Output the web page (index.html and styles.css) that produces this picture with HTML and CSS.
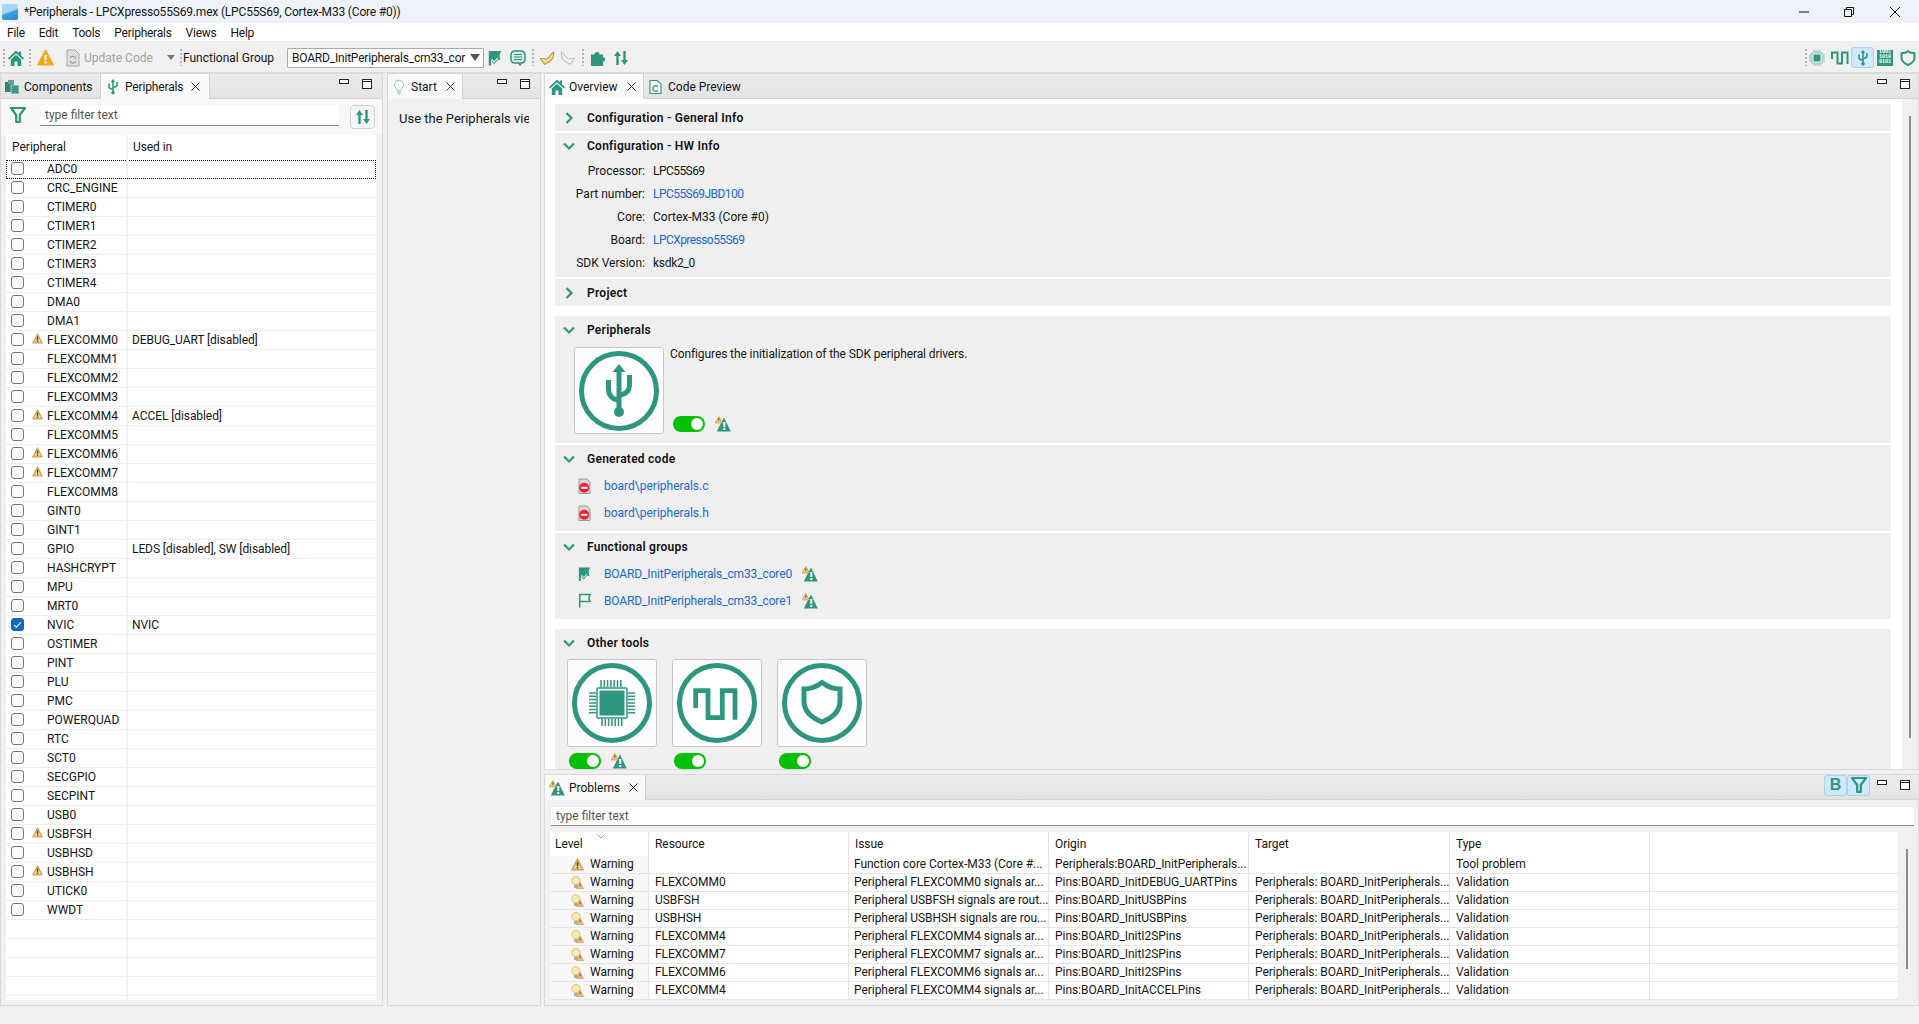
FILE: index.html
```html
<!DOCTYPE html>
<html lang="en">
<head>
<meta charset="utf-8">
<title>Peripherals - LPCXpresso55S69.mex</title>
<link rel="stylesheet" href="styles.css">
</head>
<body>
<svg class="defs" width="0" height="0">
  <symbol id="warn-t" viewBox="0 0 16 16"><path d="M9 1.500 15.800 15.500H1.800L5 9z" fill="#2e967e"/><rect x="8.300" y="6" width="2" height="5" fill="#fff"/><rect x="8.300" y="12" width="2" height="2" fill="#fff"/><path d="M3.800 0.500 7.500 7H0.200z" fill="#f3c673" stroke="#b98d3f" stroke-width=".6" stroke-linejoin="round"/><rect x="3.300" y="2.200" width="1" height="2.600" fill="#6b4a12"/></symbol>
  <symbol id="warn-y" viewBox="0 0 12 12"><path d="M6 1 11 10.800H1z" fill="#f8d591" stroke="#cfa262" stroke-linejoin="round" stroke-width="1.400"/><rect x="5.300" y="3.800" width="1.500" height="3.800" fill="#5a4312"/><rect x="5.300" y="8.300" width="1.500" height="1.500" fill="#5a4312"/></symbol>
  <symbol id="warn-b" viewBox="0 0 14 14"><circle cx="5.300" cy="5" r="4.500" fill="#fbeab0" stroke="#d6bd74"/><rect x="3.300" y="9.500" width="4" height="3.500" fill="#a9aeb8"/><path d="M9.800 6.500 13.500 13.500H6z" fill="#f3c070" stroke="#b5863a" stroke-width=".6"/><rect x="9.300" y="8.500" width=".9" height="2.700" fill="#5a4312"/></symbol>
  <symbol id="home" viewBox="0 0 16 16"><path d="M8 .5 0 8.200l1.200 1.400L8 3.200l6.800 6.400L16 8.200l-3-2.900V1.500h-2.200v1.700z" fill="#2e967e"/><path d="M2.800 9.500 8 4.700l5.200 4.800V16H9.500v-4.500h-3V16H2.800z" fill="#2e967e"/></symbol>
  <symbol id="comp" viewBox="0 0 16 16"><rect x="1" y="3" width="9" height="10" fill="#2e8571"/><rect x="4" y="1" width="6" height="4" fill="#58a795"/><rect x="7" y="6" width="8" height="9" fill="#3f9a85" stroke="#e8e8e8" stroke-width=".7"/></symbol>
  <symbol id="usb" viewBox="0 0 16 18"><g stroke="#2e967e" fill="none" stroke-width="1.800"><path d="M8 3v12"/><path d="M3.500 5v3.500q0 2.500 4 3"/><path d="M12.500 3.500v3q0 2.500-4 3"/></g><path d="M8 0l2.500 3.500h-5z" fill="#2e967e"/><circle cx="8" cy="15.500" r="2" fill="#2e967e"/></symbol>
  <symbol id="bulb" viewBox="0 0 14 18"><path d="M7 1a5.500 5.500 0 0 0-3 10q.8.800 1 2.500h4q.2-1.700 1-2.500a5.500 5.500 0 0 0-3-10z" fill="#fff" stroke="#74bfae"/><path d="M5 15h4M5.500 17h3" stroke="#74bfae"/></symbol>
  <symbol id="codep" viewBox="0 0 14 16"><path d="M1 1h8l4 4v10H1z" fill="#eef5f3" stroke="#2e967e" stroke-width="1.200"/><path d="M9.500 7.500a3 3 0 1 0 0 4" fill="none" stroke="#2e967e" stroke-width="1.400"/></symbol>
  <symbol id="filter" viewBox="0 0 16 16"><path d="M1 1h14L9.800 8v7H6.200V8z" fill="none" stroke="#2e967e" stroke-width="2.200" stroke-linejoin="round"/></symbol>
  <symbol id="sort" viewBox="0 0 16 16"><path d="M4.500 1 8 6H5.700v9H3.300V6H1zM11.500 15 8 10h2.300V1h2.400v9H15z" fill="#2e967e"/></symbol>
  <symbol id="doc" viewBox="0 0 14 18"><path d="M1 1h8l4 4v12H1z" fill="#e0e0e0" stroke="#a8a8a8"/><path d="M9.800 9.500a3 3 0 0 0-5.500-.5M4.200 12a3 3 0 0 0 5.500.5" fill="none" stroke="#9a9a9a" stroke-width="1.300"/></symbol>
  <symbol id="flag-c" viewBox="0 0 16 18"><path d="M1 1h14l-2 5 1 5H10l-3 3-2.500-3H3.500v6.500H1z" fill="#2e967e"/><path d="M4.500 11.500 7 14.500 11.500 9.500" fill="none" stroke="#2e967e" stroke-width="1.500"/><path d="M4.500 10.500 7 13.500 11 9" fill="none" stroke="#fff" stroke-width="1.200"/></symbol>
  <symbol id="flag" viewBox="0 0 15 17"><path d="M2 16V1h12l-1.500 4.500L14 9H2" fill="none" stroke="#2e967e" stroke-width="1.800"/></symbol>
  <symbol id="dbdoc" viewBox="0 0 16 16"><path d="M4.500 1h7A3.500 3.500 0 0 1 15 4.500v5a3.500 3.500 0 0 1-3.500 3.500H11l-1 2-1-2H4.500A3.500 3.500 0 0 1 1 9.500v-5A3.500 3.500 0 0 1 4.500 1z" fill="#d2e9e3" stroke="#2e967e" stroke-width="1.500"/><path d="M4 4.500h8M4 7h8M4 9.500h8" stroke="#2e967e" stroke-width="1.200"/></symbol>
  <symbol id="undo" viewBox="0 0 17 16"><path d="M15.500 1.500c.5 4-1 8-4 10-2 1.300-4 2-5.500 3.200L1.500 8.500H5c1 0 2.500 1 3.500.5 2-1 3-4 7-7.500z" fill="#f6d991" stroke="#c9973f" stroke-linejoin="round" stroke-width="1.200"/></symbol>
  <symbol id="redo" viewBox="0 0 17 16"><path d="M1.500 1.500c-.5 4 1 8 4 10 2 1.300 4 2 5.500 3.200l4.500-6.200H12c-1 0-2.500 1-3.500.5-2-1-3-4-7-7.500z" fill="#f4f4f4" stroke="#c4c4c4" stroke-linejoin="round" stroke-width="1.200"/></symbol>
  <symbol id="lego" viewBox="0 0 16 16"><path d="M1 4.500h3.500a2.500 2.500 0 1 1 5 0H13v2.800a2.200 2.200 0 1 1 0 4.400V16H1z" fill="#2e967e"/></symbol>
  <symbol id="chip" viewBox="0 0 16 16"><rect x="3" y="3" width="10" height="10" fill="#fff" stroke="#7fc2b2"/><rect x="4.500" y="4.500" width="7" height="7" fill="#2e967e"/><path d="M5 0v2.500M7 0v2.500M9 0v2.500M11 0v2.500M5 13.500V16M7 13.500V16M9 13.500V16M11 13.500V16M0 5h2.500M0 7h2.500M0 9h2.500M0 11h2.500M13.500 5H16M13.500 7H16M13.500 9H16M13.500 11H16" stroke="#7fc2b2"/></symbol>
  <symbol id="pulse" viewBox="0 0 18 16"><path d="M1 9V2.500H6.500V13.500H11V2.500H16.500V14" fill="none" stroke="#2e967e" stroke-width="2"/></symbol>
  <symbol id="shield" viewBox="0 0 16 16"><path d="M8 1.200C6.500 2.500 4 3.200 1.500 3.200V8c0 3 3 5.500 6.500 7 3.500-1.500 6.500-4 6.500-7V3.200C12 3.200 9.500 2.500 8 1.200z" fill="none" stroke="#2e967e" stroke-width="2"/></symbol>
  <symbol id="nogo" viewBox="0 0 13 16"><path d="M1 1h8l3 3v11.500H1z" fill="#d8d8d8" stroke="#9a9a9a"/><circle cx="6.200" cy="9.800" r="5" fill="#f02030"/><rect x="3" y="8.800" width="6.500" height="2" fill="#fff"/></symbol>
  <symbol id="t-usb" viewBox="0 0 80 80"><circle cx="40" cy="40" r="37.500" fill="#fff" stroke="#2e967e" stroke-width="5"/><g fill="none" stroke="#2e967e" stroke-width="5"><path d="M40 18v42"/><path d="M29.500 29v9q0 9 9 11"/><path d="M50.500 24v10q0 8-9 10"/></g><path d="M40 13l6.500 8h-13z" fill="#2e967e"/><circle cx="40" cy="61" r="5" fill="#2e967e"/></symbol>
  <symbol id="t-chip" viewBox="0 0 80 80"><circle cx="40" cy="40" r="37.500" fill="#fff" stroke="#2e967e" stroke-width="5"/><rect x="27.500" y="27.500" width="25" height="25" fill="#2e967e"/><rect x="25" y="25" width="30" height="30" rx="1" fill="none" stroke="#2e967e" stroke-width="1.500"/><path d="M29 24v-7M32.300 24v-7M35.600 24v-7M38.900 24v-7M42.200 24v-7M45.500 24v-7M48.800 24v-7M30 56v7M33.300 56v7M36.600 56v7M39.900 56v7M43.200 56v7M46.500 56v7M49.800 56v7M24 30h-7M24 33.300h-7M24 36.600h-7M24 39.900h-7M24 43.200h-7M24 46.500h-7M24 49.800h-7M56 30h7M56 33.300h7M56 36.600h7M56 39.900h7M56 43.200h7M56 46.500h7M56 49.800h7" stroke="#2e967e" stroke-width="1.500"/></symbol>
  <symbol id="t-pulse" viewBox="0 0 80 80"><circle cx="40" cy="40" r="37.500" fill="#fff" stroke="#2e967e" stroke-width="5"/><path d="M18.700 45V27.700H31V54.700H45.300V27.700H58V56.700" fill="none" stroke="#2e967e" stroke-width="4.800"/></symbol>
  <symbol id="t-shield" viewBox="0 0 80 80"><circle cx="40" cy="40" r="37.500" fill="#fff" stroke="#2e967e" stroke-width="5"/><path d="M40 19.500C34 24 28 26 22 26V38C22 48 30 55 40 59 50 55 58 48 58 38V26C52 26 46 24 40 19.500Z" fill="none" stroke="#2e967e" stroke-width="5"/></symbol>
  <symbol id="chev-r" viewBox="0 0 12 12"><path d="M3.500 1 8.500 6l-5 5" fill="none" stroke="#2e967e" stroke-width="2.200"/></symbol>
  <symbol id="chev-d" viewBox="0 0 12 12"><path d="M1 3.500 6 8.500l5-5" fill="none" stroke="#2e967e" stroke-width="2.200"/></symbol>
  <symbol id="x" viewBox="0 0 10 10"><path d="M.5.500l9 9M9.500.500l-9 9" stroke="#222" fill="none"/></symbol>
  <symbol id="min" viewBox="0 0 10 6"><rect x=".5" y=".5" width="9" height="4" fill="#fff" stroke="#222"/></symbol>
  <symbol id="max" viewBox="0 0 10 10"><rect x=".5" y=".5" width="9" height="9" fill="#fff" stroke="#222"/><path d="M0 2.500h10" stroke="#222"/></symbol>
</svg>

<header class="titlebar">
  <span class="appicon"></span>
  <span class="titletext">*Peripherals - LPCXpresso55S69.mex (LPC55S69, Cortex-M33 (Core #0))</span>
  <span class="winctl">
    <svg class="wmin" viewBox="0 0 10 2"><path d="M0 1h10" stroke="#111"/></svg>
    <svg class="wres" viewBox="0 0 10 10"><path d="M.5 2.500h7v7h-7zM2.500 2.500V.5h7v7H7.500" fill="none" stroke="#111"/></svg>
    <svg class="wclose" viewBox="0 0 10 10"><path d="M0 0l10 10M10 0 0 10" stroke="#111"/></svg>
  </span>
</header>

<nav class="menubar"><span>File</span><span>Edit</span><span>Tools</span><span>Peripherals</span><span>Views</span><span>Help</span></nav>

<div class="toolbar">
  <span class="grip g1"></span>
  <svg class="ti ml3"><use href="#home"/></svg>
  <span class="grip g2"></span>
  <svg class="warnbig"  viewBox="0 0 16 16"><path d="M8 1 15.500 15H.5z" fill="#f9a51a" stroke="#f9a51a" stroke-linejoin="round"/><rect x="7" y="5.500" width="2" height="5" fill="#fff"/><rect x="7" y="11.500" width="2" height="2" fill="#fff"/></svg>
  <svg class="docicon"><use href="#doc"/></svg>
  <span class="tb-muted">Update Code</span>
  <span class="tb-arrow"></span>
  <span class="grip g2"></span>
  <span class="tb-label">Functional Group</span>
  <span class="combo"><span class="combo-text">BOARD_InitPeripherals_cm33_cor</span><span class="combo-arrow"></span></span>
  <svg class="ti ml3"><use href="#flag-c"/></svg>
  <svg class="ti ml7"><use href="#dbdoc"/></svg>
  <span class="grip g3"></span>
  <svg class="ti ml5"><use href="#undo"/></svg>
  <svg class="ti ml5"><use href="#redo"/></svg>
  <span class="grip g3"></span>
  <svg class="ti ml6"><use href="#lego"/></svg>
  <svg class="ti ml7"><use href="#sort"/></svg>
  <span class="tb-right">
    <span class="grip"></span>
    <svg class="ti ml2"><use href="#chip"/></svg>
    <svg class="ti-w ml6"><use href="#pulse"/></svg>
    <span class="tbtn on ml2"><svg class="ti"><use href="#usb"/></svg></span>
    <span class="binary ml3"><span>1001</span><span>1010</span><span>0101</span></span>
    <svg class="ti ml7"><use href="#shield"/></svg>
  </span>
</div>

<main class="workbench">
  <section class="panel p-left">
    <div class="tabbar">
      <div class="tab t-comp"><svg class="tabicon"><use href="#comp"/></svg><span>Components</span></div>
      <div class="tab sel t-peri"><svg class="tabicon"><use href="#usb"/></svg><span>Peripherals</span><svg class="xicon"><use href="#x"/></svg></div>
      <div class="panelctl narrow"><svg class="minicon"><use href="#min"/></svg><svg class="maxicon"><use href="#max"/></svg></div>
    </div>
    <div class="filterrow">
      <svg class="filtericon"><use href="#filter"/></svg>
      <div class="filterinput">type filter text</div>
      <div class="sortbtn"><svg class="ti"><use href="#sort"/></svg></div>
    </div>
    <div class="ptable">
      <div class="phead"><span class="pc1">Peripheral</span><span class="pc2">Used in</span></div>
      <div class="prow focus"><div class="pc1"><i class="cb"></i><span class="pname">ADC0</span></div><div class="pc2"></div></div>
      <div class="prow"><div class="pc1"><i class="cb"></i><span class="pname">CRC_ENGINE</span></div><div class="pc2"></div></div>
      <div class="prow"><div class="pc1"><i class="cb"></i><span class="pname">CTIMER0</span></div><div class="pc2"></div></div>
      <div class="prow"><div class="pc1"><i class="cb"></i><span class="pname">CTIMER1</span></div><div class="pc2"></div></div>
      <div class="prow"><div class="pc1"><i class="cb"></i><span class="pname">CTIMER2</span></div><div class="pc2"></div></div>
      <div class="prow"><div class="pc1"><i class="cb"></i><span class="pname">CTIMER3</span></div><div class="pc2"></div></div>
      <div class="prow"><div class="pc1"><i class="cb"></i><span class="pname">CTIMER4</span></div><div class="pc2"></div></div>
      <div class="prow"><div class="pc1"><i class="cb"></i><span class="pname">DMA0</span></div><div class="pc2"></div></div>
      <div class="prow"><div class="pc1"><i class="cb"></i><span class="pname">DMA1</span></div><div class="pc2"></div></div>
      <div class="prow"><div class="pc1"><i class="cb"></i><svg class="pwarn"><use href="#warn-y"/></svg><span class="pname">FLEXCOMM0</span></div><div class="pc2">DEBUG_UART [disabled]</div></div>
      <div class="prow"><div class="pc1"><i class="cb"></i><span class="pname">FLEXCOMM1</span></div><div class="pc2"></div></div>
      <div class="prow"><div class="pc1"><i class="cb"></i><span class="pname">FLEXCOMM2</span></div><div class="pc2"></div></div>
      <div class="prow"><div class="pc1"><i class="cb"></i><span class="pname">FLEXCOMM3</span></div><div class="pc2"></div></div>
      <div class="prow"><div class="pc1"><i class="cb"></i><svg class="pwarn"><use href="#warn-y"/></svg><span class="pname">FLEXCOMM4</span></div><div class="pc2">ACCEL [disabled]</div></div>
      <div class="prow"><div class="pc1"><i class="cb"></i><span class="pname">FLEXCOMM5</span></div><div class="pc2"></div></div>
      <div class="prow"><div class="pc1"><i class="cb"></i><svg class="pwarn"><use href="#warn-y"/></svg><span class="pname">FLEXCOMM6</span></div><div class="pc2"></div></div>
      <div class="prow"><div class="pc1"><i class="cb"></i><svg class="pwarn"><use href="#warn-y"/></svg><span class="pname">FLEXCOMM7</span></div><div class="pc2"></div></div>
      <div class="prow"><div class="pc1"><i class="cb"></i><span class="pname">FLEXCOMM8</span></div><div class="pc2"></div></div>
      <div class="prow"><div class="pc1"><i class="cb"></i><span class="pname">GINT0</span></div><div class="pc2"></div></div>
      <div class="prow"><div class="pc1"><i class="cb"></i><span class="pname">GINT1</span></div><div class="pc2"></div></div>
      <div class="prow"><div class="pc1"><i class="cb"></i><span class="pname">GPIO</span></div><div class="pc2">LEDS [disabled], SW [disabled]</div></div>
      <div class="prow"><div class="pc1"><i class="cb"></i><span class="pname">HASHCRYPT</span></div><div class="pc2"></div></div>
      <div class="prow"><div class="pc1"><i class="cb"></i><span class="pname">MPU</span></div><div class="pc2"></div></div>
      <div class="prow"><div class="pc1"><i class="cb"></i><span class="pname">MRT0</span></div><div class="pc2"></div></div>
      <div class="prow"><div class="pc1"><i class="cb on"><svg class="cbcheck" viewBox="0 0 10 10"><path d="M2 5.500 4 7.500 8 3" fill="none" stroke="#fff"/></svg></i><span class="pname">NVIC</span></div><div class="pc2">NVIC</div></div>
      <div class="prow"><div class="pc1"><i class="cb"></i><span class="pname">OSTIMER</span></div><div class="pc2"></div></div>
      <div class="prow"><div class="pc1"><i class="cb"></i><span class="pname">PINT</span></div><div class="pc2"></div></div>
      <div class="prow"><div class="pc1"><i class="cb"></i><span class="pname">PLU</span></div><div class="pc2"></div></div>
      <div class="prow"><div class="pc1"><i class="cb"></i><span class="pname">PMC</span></div><div class="pc2"></div></div>
      <div class="prow"><div class="pc1"><i class="cb"></i><span class="pname">POWERQUAD</span></div><div class="pc2"></div></div>
      <div class="prow"><div class="pc1"><i class="cb"></i><span class="pname">RTC</span></div><div class="pc2"></div></div>
      <div class="prow"><div class="pc1"><i class="cb"></i><span class="pname">SCT0</span></div><div class="pc2"></div></div>
      <div class="prow"><div class="pc1"><i class="cb"></i><span class="pname">SECGPIO</span></div><div class="pc2"></div></div>
      <div class="prow"><div class="pc1"><i class="cb"></i><span class="pname">SECPINT</span></div><div class="pc2"></div></div>
      <div class="prow"><div class="pc1"><i class="cb"></i><span class="pname">USB0</span></div><div class="pc2"></div></div>
      <div class="prow"><div class="pc1"><i class="cb"></i><svg class="pwarn"><use href="#warn-y"/></svg><span class="pname">USBFSH</span></div><div class="pc2"></div></div>
      <div class="prow"><div class="pc1"><i class="cb"></i><span class="pname">USBHSD</span></div><div class="pc2"></div></div>
      <div class="prow"><div class="pc1"><i class="cb"></i><svg class="pwarn"><use href="#warn-y"/></svg><span class="pname">USBHSH</span></div><div class="pc2"></div></div>
      <div class="prow"><div class="pc1"><i class="cb"></i><span class="pname">UTICK0</span></div><div class="pc2"></div></div>
      <div class="prow"><div class="pc1"><i class="cb"></i><span class="pname">WWDT</span></div><div class="pc2"></div></div>
      <div class="prow"><div class="pc1"></div><div class="pc2"></div></div>
      <div class="prow"><div class="pc1"></div><div class="pc2"></div></div>
      <div class="prow"><div class="pc1"></div><div class="pc2"></div></div>
      <div class="prow"><div class="pc1"></div><div class="pc2"></div></div>
      <div class="prow"><div class="pc1"></div><div class="pc2"></div></div>
    </div>
  </section>

  <section class="panel p-mid">
    <div class="tabbar">
      <div class="tab sel t-start"><svg class="tabicon-b"><use href="#bulb"/></svg><span>Start</span><svg class="xicon"><use href="#x"/></svg></div>
      <div class="panelctl narrow"><svg class="minicon"><use href="#min"/></svg><svg class="maxicon"><use href="#max"/></svg></div>
    </div>
    <div class="starttext">Use the Peripherals vie</div>
  </section>

  <div class="rightcol">
    <section class="panel p-over">
      <div class="tabbar">
        <div class="tab sel t-over"><svg class="tabicon"><use href="#home"/></svg><span>Overview</span><svg class="xicon"><use href="#x"/></svg></div>
        <div class="tab t-code"><svg class="tabicon-c"><use href="#codep"/></svg><span>Code Preview</span></div>
        <div class="panelctl"><svg class="minicon"><use href="#min"/></svg><svg class="maxicon"><use href="#max"/></svg></div>
      </div>
      <div class="overbody">
        <div class="sections">
          <div class="sec mb2"><div class="sechead"><svg class="chev"><use href="#chev-r"/></svg><span>Configuration - General Info</span></div></div>
          <div class="sec mb2 hw">
            <div class="sechead"><svg class="chev"><use href="#chev-d"/></svg><span>Configuration - HW Info</span></div>
            <div class="kv"><span class="k">Processor:</span><span class="lpc">LPC55S69</span></div>
            <div class="kv"><span class="k">Part number:</span><a class="link lpc">LPC55S69JBD100</a></div>
            <div class="kv"><span class="k">Core:</span><span>Cortex-M33 (Core #0)</span></div>
            <div class="kv"><span class="k">Board:</span><a class="link lpc">LPCXpresso55S69</a></div>
            <div class="kv"><span class="k">SDK Version:</span><span class="lpc2">ksdk2_0</span></div>
          </div>
          <div class="sec mb10"><div class="sechead"><svg class="chev"><use href="#chev-r"/></svg><span>Project</span></div></div>
          <div class="sec mb2 periph">
            <div class="sechead"><svg class="chev"><use href="#chev-d"/></svg><span>Peripherals</span></div>
            <div class="periphbody">
              <div class="tile t87"><svg class="tileimg"><use href="#t-usb"/></svg></div>
              <div class="periphinfo">
                <div class="desc">Configures the initialization of the SDK peripheral drivers.</div>
                <div class="togglerow"><span class="toggle"></span><svg class="warnt"><use href="#warn-t"/></svg></div>
              </div>
            </div>
          </div>
          <div class="sec mb2 list">
            <div class="sechead"><svg class="chev"><use href="#chev-d"/></svg><span>Generated code</span></div>
            <div class="lrow"><svg class="nogo"><use href="#nogo"/></svg><a class="link">board\peripherals.c</a></div>
            <div class="lrow"><svg class="nogo"><use href="#nogo"/></svg><a class="link">board\peripherals.h</a></div>
          </div>
          <div class="sec mb10 list">
            <div class="sechead"><svg class="chev"><use href="#chev-d"/></svg><span>Functional groups</span></div>
            <div class="lrow"><svg class="nogo"><use href="#flag-c"/></svg><a class="link fn">BOARD_InitPeripherals_cm33_core0</a><svg class="warnt"><use href="#warn-t"/></svg></div>
            <div class="lrow"><svg class="nogo"><use href="#flag"/></svg><a class="link fn">BOARD_InitPeripherals_cm33_core1</a><svg class="warnt"><use href="#warn-t"/></svg></div>
          </div>
          <div class="sec other">
            <div class="sechead"><svg class="chev"><use href="#chev-d"/></svg><span>Other tools</span></div>
            <div class="tools">
              <div class="tool"><div class="tile"><svg class="tileimg"><use href="#t-chip"/></svg></div><div class="togglerow2"><span class="toggle"></span><svg class="warnt"><use href="#warn-t"/></svg></div></div>
              <div class="tool"><div class="tile"><svg class="tileimg"><use href="#t-pulse"/></svg></div><div class="togglerow2"><span class="toggle"></span></div></div>
              <div class="tool"><div class="tile"><svg class="tileimg"><use href="#t-shield"/></svg></div><div class="togglerow2"><span class="toggle"></span></div></div>
            </div>
          </div>
        </div>
        <div class="vscroll"><span class="thumb"></span></div>
      </div>
    </section>

    <section class="panel p-prob">
      <div class="tabbar">
        <div class="tab sel t-prob"><svg class="tabicon"><use href="#warn-t"/></svg><span>Problems</span><svg class="xicon"><use href="#x"/></svg></div>
        <div class="panelctl">
          <span class="tbtn on b-btn">B</span>
          <span class="tbtn on f-btn"><svg class="ti"><use href="#filter"/></svg></span>
          <svg class="minicon"><use href="#min"/></svg><svg class="maxicon"><use href="#max"/></svg>
        </div>
      </div>
      <div class="probfilter">type filter text</div>
      <div class="probwrap">
        <div class="probtable">
          <div class="gr ghead"><div class="lvl">Level<svg class="sortcaret" viewBox="0 0 8 5"><path d="M.5.500 4 4 7.500.5" fill="none" stroke="#999"/></svg></div><div>Resource</div><div>Issue</div><div>Origin</div><div>Target</div><div>Type</div><div></div></div>
          <div class="gr"><div class="lvl"><svg class="lvlicon"><use href="#warn-y"/></svg>Warning</div><div></div><div>Function core Cortex-M33 (Core #...</div><div>Peripherals:BOARD_InitPeripherals...</div><div></div><div>Tool problem</div><div></div></div>
          <div class="gr"><div class="lvl"><svg class="lvlicon"><use href="#warn-b"/></svg>Warning</div><div>FLEXCOMM0</div><div>Peripheral FLEXCOMM0 signals ar...</div><div>Pins:BOARD_InitDEBUG_UARTPins</div><div>Peripherals: BOARD_InitPeripherals...</div><div>Validation</div><div></div></div>
          <div class="gr"><div class="lvl"><svg class="lvlicon"><use href="#warn-b"/></svg>Warning</div><div>USBFSH</div><div>Peripheral USBFSH signals are rout...</div><div>Pins:BOARD_InitUSBPins</div><div>Peripherals: BOARD_InitPeripherals...</div><div>Validation</div><div></div></div>
          <div class="gr"><div class="lvl"><svg class="lvlicon"><use href="#warn-b"/></svg>Warning</div><div>USBHSH</div><div>Peripheral USBHSH signals are rou...</div><div>Pins:BOARD_InitUSBPins</div><div>Peripherals: BOARD_InitPeripherals...</div><div>Validation</div><div></div></div>
          <div class="gr"><div class="lvl"><svg class="lvlicon"><use href="#warn-b"/></svg>Warning</div><div>FLEXCOMM4</div><div>Peripheral FLEXCOMM4 signals ar...</div><div>Pins:BOARD_InitI2SPins</div><div>Peripherals: BOARD_InitPeripherals...</div><div>Validation</div><div></div></div>
          <div class="gr"><div class="lvl"><svg class="lvlicon"><use href="#warn-b"/></svg>Warning</div><div>FLEXCOMM7</div><div>Peripheral FLEXCOMM7 signals ar...</div><div>Pins:BOARD_InitI2SPins</div><div>Peripherals: BOARD_InitPeripherals...</div><div>Validation</div><div></div></div>
          <div class="gr"><div class="lvl"><svg class="lvlicon"><use href="#warn-b"/></svg>Warning</div><div>FLEXCOMM6</div><div>Peripheral FLEXCOMM6 signals ar...</div><div>Pins:BOARD_InitI2SPins</div><div>Peripherals: BOARD_InitPeripherals...</div><div>Validation</div><div></div></div>
          <div class="gr"><div class="lvl"><svg class="lvlicon"><use href="#warn-b"/></svg>Warning</div><div>FLEXCOMM4</div><div>Peripheral FLEXCOMM4 signals ar...</div><div>Pins:BOARD_InitACCELPins</div><div>Peripherals: BOARD_InitPeripherals...</div><div>Validation</div><div></div></div>
          <div class="gr"><div class="lvl"></div><div></div><div></div><div></div><div></div><div></div><div></div></div>
        </div>
        <div class="vscroll2"><span class="thumb2"></span></div>
      </div>
    </section>
  </div>
</main>
</body>
</html>
```

FILE: styles.css
```css
* { box-sizing: border-box; }
html, body { margin: 0; padding: 0; height: 100%; }
body {
  width: 1919px; height: 1024px; overflow: hidden;
  background: #f0f0f0; color: #151515;
  font: 12px/16px Roboto, "Liberation Sans", sans-serif;
  display: flex; flex-direction: column;
}
.defs { position: absolute; }
svg { display: block; flex: none; }

/* title + menu */
.titlebar { height: 23px; background: #eef3fa; display: flex; align-items: center; padding-left: 2px; flex: none; }
.appicon { width: 16px; height: 16px; border-radius: 2px; background: linear-gradient(160deg, #a6d8f5 45%, #3f9fe0 55%, #2a86d0); }
.titletext { margin-left: 6px; letter-spacing: -.18px; }
.winctl { margin-left: auto; display: flex; align-items: center; }
.wmin { width: 10px; height: 2px; margin-right: 35px; }
.wres { width: 10px; height: 10px; margin-right: 36px; }
.wclose { width: 10px; height: 10px; margin-right: 19px; }
.menubar { height: 18px; background: #fff; display: flex; gap: 14px; padding: 2px 0 0 7px; align-items: center; flex: none; letter-spacing: -.25px; }

/* toolbar */
.toolbar { height: 32px; flex: none; background: #f0f0f0; display: flex; align-items: center; border-bottom: 1px solid #dcdcdc; padding-top: 2px; }
.grip { width: 2px; height: 17px; flex: none; background: repeating-linear-gradient(#b5b5a8 0 2px, transparent 2px 4px); }
.g1 { margin-left: 3px; }
.g2 { margin-left: 5px; }
.g3 { margin-left: 6px; }
.ti { width: 16px; height: 16px; }
.ti-w { width: 18px; height: 16px; }
.ml2 { margin-left: 2px; } .ml3 { margin-left: 3px; } .ml5 { margin-left: 5px; }
.ml6 { margin-left: 6px; } .ml7 { margin-left: 7px; }
.warnbig { width: 17px; height: 17px; margin-left: 6px; }
.docicon { width: 14px; height: 18px; margin-left: 12px; }
.tb-muted { color: #a3a3a3; margin-left: 4px; width: 69px; white-space: nowrap; }
.tb-arrow { margin-left: 14px; width: 0; height: 0; border: 4px solid transparent; border-top: 5px solid #777; border-bottom: 0; }
.tb-label { margin-left: 1px; width: 104px; white-space: nowrap; }
.combo { width: 197px; height: 20px; background: #fdfdfd; border: 1px solid #a9a9a9; border-radius: 1px; display: flex; align-items: center; padding-left: 4px; overflow: hidden; }
.combo-text { width: 173px; white-space: nowrap; letter-spacing: -.2px; }
.combo-arrow { margin-left: 5px; width: 0; height: 0; border: 5px solid transparent; border-top: 7px solid #555; border-bottom: 0; }
.tb-right { margin-left: auto; display: flex; align-items: center; margin-right: 3px; }
.tbtn { display: flex; align-items: center; justify-content: center; background: #cfe8fb; border: 1px solid #a5d2f5; border-radius: 3px; }
.tb-right .tbtn { width: 23px; height: 21px; }
.binary { width: 16px; height: 16px; background: #2e967e; color: #fff; font: 700 5px/5px "Liberation Mono", monospace; display: flex; flex-direction: column; align-items: center; justify-content: center; }

/* panels */
.workbench { display: flex; flex: none; height: 933px; }
.panel { background: #f0f0f0; border: 1px solid #d9d9d9; display: flex; flex-direction: column; overflow: hidden; }
.p-left { width: 383px; }
.p-mid { width: 154px; margin-left: 4px; }
.rightcol { margin-left: 3px; width: 1375px; display: flex; flex-direction: column; gap: 4px; }
.tabbar { height: 25px; flex: none; display: flex; background: linear-gradient(#ececec, #e3e3e3); border-bottom: 1px solid #d5d5d5; }
.tab { display: flex; align-items: center; border-right: 1px solid #d2d2d2; white-space: nowrap; height: 25px; }
.tab.sel { background: #f9f9f9; }
.tabicon { width: 16px; height: 16px; margin-right: 4px; }
.tabicon-b { width: 12px; height: 16px; margin-right: 6px; }
.tabicon-c { width: 13px; height: 16px; margin-right: 6px; }
.xicon { width: 9px; height: 9px; margin-left: 10px; }
.t-comp { width: 100px; padding-left: 3px; }
.t-peri { width: 109px; padding-left: 4px; letter-spacing: -.15px; }
.t-peri .xicon { margin-left: 8px; }
.t-start { width: 75px; padding-left: 5px; }
.t-start .xicon { margin-left: 9px; }
.t-over { width: 99px; padding-left: 4px; }
.t-over .xicon { margin-left: 9px; }
.t-code { padding-left: 5px; border-right: 0; }
.t-prob { width: 101px; padding-left: 4px; }
.t-prob .xicon { margin-left: 9px; }
.panelctl { margin-left: auto; display: flex; align-items: center; height: 20px; padding-right: 8px; }
.panelctl.narrow { padding-right: 10px; }
.minicon { width: 10px; height: 6px; margin-right: 13px; margin-top: -5px; }
.maxicon { width: 10px; height: 10px; }

/* left panel */
.filterrow { height: 36px; flex: none; display: flex; align-items: flex-start; padding-top: 6px; background: #f8f8f8; }
.filtericon { width: 16px; height: 16px; margin: 2px 0 0 9px; }
.filterinput { margin-left: 14px; width: 299px; height: 21px; background: #fff; border-bottom: 1px solid #8a8a8a; color: #555; padding: 2px 0 0 5px; }
.sortbtn { margin-left: 11px; width: 25px; height: 24px; background: #f7f7f7; border: 1px solid #d0d0d0; border-radius: 4px; display: flex; align-items: center; justify-content: center; }
.ptable { margin-left: 5px; width: 370px; flex: 1; background: #fff; overflow: hidden; margin-bottom: 5px; }
.phead { height: 25px; display: flex; align-items: center; }
.phead .pc1 { padding: 0 0 2px 6px; }
.phead .pc2 { padding: 0 0 2px 5px; }
.pc1 { width: 122px; height: 100%; flex: none; display: flex; align-items: center; border-right: 2px solid #eff2f7; white-space: nowrap; overflow: visible; position: relative; }
.pc2 { padding-left: 4px; white-space: nowrap; letter-spacing: -.08px; }
.prow { height: 19px; display: flex; align-items: center; border-bottom: 1px solid #eeeeee; }
.prow.focus { outline: 1px dotted #111; outline-offset: -1px; }
.cb { width: 13px; height: 13px; margin: -2px 0 0 5px; flex: none; background: #fbfbfb; border: 1px solid #767676; border-radius: 3px; display: block; }
.cb.on { background: #0f68c0; border-color: #0f68c0; }
.cbcheck { width: 11px; height: 11px; }
.pname { position: absolute; left: 41px; }
.pwarn { width: 11px; height: 11px; position: absolute; left: 26px; top: 2px; }

/* mid */
.starttext { padding: 12px 0 0 11px; white-space: nowrap; overflow: hidden; font-size: 13px; width: 141px; }

/* overview */
.p-over { height: 697px; flex: none; }
.overbody { flex: 1; display: flex; overflow: hidden; }
.sections { width: 1358px; background: #fff; padding: 5px 11px 0 10px; overflow: hidden; }
.sec { background: #efefef; }
.mb2 { margin-bottom: 2px; }
.mb10 { margin-bottom: 10px; }
.sechead { height: 27px; display: flex; align-items: center; font-weight: 600; color: #111; letter-spacing: .25px; }
.chev { width: 12px; height: 12px; margin: 0 12px 0 8px; }
.hw { height: 144px; }
.hw .sechead { height: 26px; }
.kv { height: 23px; display: flex; align-items: center; }
.k { width: 90px; text-align: right; margin-right: 8px; }
.link { color: #1a68d2; white-space: nowrap; }
.lpc { letter-spacing: -.55px; }
.lpc2 { letter-spacing: -.3px; }
.fn { width: 188px; letter-spacing: -.13px; }
.periph { height: 127px; }
.periphbody { display: flex; margin: 4px 0 0 19px; }
.tile { width: 90px; height: 88px; flex: none; background: #fcfcfc; border: 1px solid #c8c8c8; border-radius: 3px; display: flex; align-items: center; justify-content: center; }
.t87 { height: 87px; }
.tileimg { width: 80px; height: 80px; }
.periphinfo { margin-left: 6px; height: 85px; display: flex; flex-direction: column; justify-content: space-between; }
.desc { margin-top: -1px; letter-spacing: -.1px; }
.togglerow { display: flex; align-items: center; margin-left: 3px; }
.toggle { width: 32px; height: 16px; border-radius: 8px; background: #04c005; flex: none; display: flex; align-items: center; justify-content: flex-end; padding-right: 2px; }
.toggle::after { content: ""; width: 12px; height: 12px; border-radius: 50%; background: #fff; }
.warnt { width: 16px; height: 16px; margin-left: 10px; }
.list { height: 86px; }
.lrow { height: 27px; display: flex; align-items: center; padding-left: 23px; }
.nogo { width: 13px; height: 16px; margin-right: 13px; }
.other { height: 200px; }
.tools { display: flex; gap: 15px; margin: 3px 0 0 12px; }
.togglerow2 { display: flex; align-items: center; margin: 6px 0 0 2px; }
.vscroll { width: 16px; background: #f0f0f0; padding-top: 17px; flex: none; display: block; }
.thumb { display: block; width: 2px; height: 622px; background: #8d8d8d; margin-left: 7px; }

/* problems */
.p-prob { flex: 1; }
.b-btn { width: 23px; height: 21px; color: #2e967e; font: 700 16px/1 "Liberation Sans", sans-serif; }
.f-btn { width: 23px; height: 21px; margin-right: 7px; }
.probfilter { margin: 7px 4px 0 6px; height: 19px; background: #fff; border-bottom: 1px solid #8a8a8a; color: #555; padding: 1px 0 0 5px; flex: none; }
.probwrap { flex: 1; display: flex; margin: 6px 0 5px 5px; overflow: hidden; }
.probtable { width: 1348px; background: #fff; overflow: hidden; letter-spacing: -.05px; }
.gr { display: grid; grid-template-columns: 99px 200px 200px 200px 201px 200px 1fr; height: 18px; }
.gr > div { border-right: 1px solid #e4e4e4; border-bottom: 1px solid #e6e6e6; padding-left: 6px; white-space: nowrap; overflow: hidden; line-height: 17px; }
.gr > div:nth-child(3) { padding-left: 5px; }
.gr > div:last-child { border-right: 0; }
.ghead { height: 24px; }
.ghead > div { border-bottom: 0; line-height: 24px; padding-top: 0; }
.ghead > div:nth-child(3) { padding-left: 6px; }
.gr > .lvl { background: #f8f8f8; padding-left: 40px; display: flex; align-items: center; position: relative; }
.ghead > .lvl { background: #fff; padding-left: 5px; }
.lvlicon { width: 13px; height: 13px; position: absolute; left: 21px; top: 2px; }
.sortcaret { width: 8px; height: 5px; position: absolute; left: 47px; top: 2px; }
.vscroll2 { flex: 1; position: relative; }
.thumb2 { display: block; width: 2px; height: 120px; background: #8d8d8d; margin: 17px 0 0 8px; }
```
